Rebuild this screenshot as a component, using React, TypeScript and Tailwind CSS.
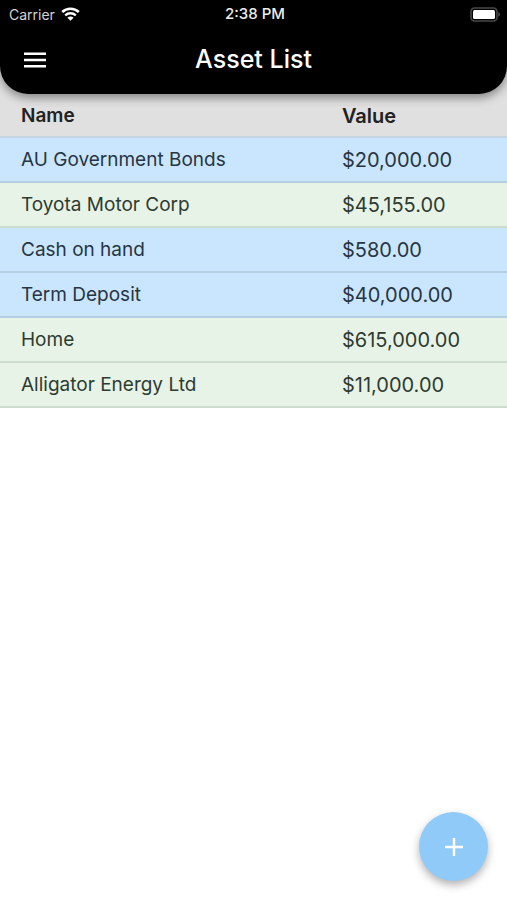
type Asset = { name: string; value: string; kind: "fixed" | "growth" };

const assets: Asset[] = [
  { name: "AU Government Bonds", value: "$20,000.00", kind: "fixed" },
  { name: "Toyota Motor Corp", value: "$45,155.00", kind: "growth" },
  { name: "Cash on hand", value: "$580.00", kind: "fixed" },
  { name: "Term Deposit", value: "$40,000.00", kind: "fixed" },
  { name: "Home", value: "$615,000.00", kind: "growth" },
  { name: "Alligator Energy Ltd", value: "$11,000.00", kind: "growth" },
];

function WifiIcon() {
  return (
    <svg width="19" height="14" viewBox="0 0 19 14" fill="none" aria-hidden="true">
      <path d="M1.2 5C5.8.6 13.2.6 17.8 5" stroke="#fff" strokeWidth="2.6" />
      <path d="M4.2 8.3c3-2.7 7.6-2.7 10.6 0" stroke="#fff" strokeWidth="2.4" />
      <path d="M9.5 13.7 6.4 10.7c1.8-1.6 4.4-1.6 6.2 0Z" fill="#fff" />
    </svg>
  );
}

function BatteryIcon() {
  return (
    <svg width="31" height="15" viewBox="0 0 31 15" aria-hidden="true">
      <rect x="1" y="1" width="26" height="13" rx="3.5" fill="#000" stroke="#484848" strokeWidth="1.6" />
      <rect x="3" y="3" width="22" height="9" rx="1.5" fill="#fff" />
      <path d="M28.4 5.3c1.9.6 1.9 3.8 0 4.4Z" fill="#5a5a5a" />
    </svg>
  );
}

function StatusBar() {
  return (
    <div className="grid h-7 grid-cols-3 items-center pr-[6px] pl-[9px]">
      <div className="flex items-center gap-[6px] text-[14px] text-[#d4d4d4]">
        <span>Carrier</span>
        <WifiIcon />
      </div>
      <div className="text-center text-[15px] font-medium text-[#ececec]">2:38 PM</div>
      <div className="flex justify-end">
        <BatteryIcon />
      </div>
    </div>
  );
}

export default function App() {
  return (
    <div className="min-h-screen bg-white font-['Inter','Liberation_Sans',sans-serif]">
      <header className="relative z-10 rounded-b-[28px] bg-black text-white shadow-[0_4px_10px_rgba(0,0,0,0.4)]">
        <StatusBar />
        <div className="grid h-[66px] grid-cols-[48px_1fr_48px] items-center px-[11px] pb-[2px]">
          <button type="button" aria-label="Open menu" className="flex size-12 items-center justify-center">
            <svg width="24" height="18" viewBox="0 0 24 18" fill="#fff" aria-hidden="true">
              <path d="M1 1.5h22V4H1zM1 7.7h22v2.5H1zM1 13.9h22v2.5H1z" />
            </svg>
          </button>
          <h1 className="text-center text-[25px] font-medium">Asset List</h1>
        </div>
      </header>
      <main className="-mt-7">
        <table className="w-full table-fixed border-separate border-spacing-0 text-left leading-6">
          <thead>
            <tr className="bg-[#e0e0e0] text-[#222] *:h-[72px] *:border-b-2 *:border-[#c5d6e3] *:pt-[30px] *:pl-[21px] *:font-semibold">
              <th scope="col" className="w-[63.3%] text-[19px]">
                Name
              </th>
              <th scope="col" className="text-[20px]">
                Value
              </th>
            </tr>
          </thead>
          <tbody>
            {assets.map((asset) => (
              <tr
                key={asset.name}
                className={
                  asset.kind === "fixed"
                    ? "bg-[#cae6fe] text-[#273542] *:border-[#b5cfe0]"
                    : "bg-[#e7f3e7] text-[#2e3b31] *:border-[#cddccf]"
                }
              >
                <td className="h-[45px] border-b-2 pl-[21px] text-[19px]">{asset.name}</td>
                <td className="h-[45px] border-b-2 pl-[21px] text-[20px]">{asset.value}</td>
              </tr>
            ))}
          </tbody>
        </table>
      </main>
      <button
        type="button"
        aria-label="Add asset"
        className="fixed right-[19px] bottom-[19px] flex size-[69px] items-center justify-center rounded-full bg-[#90caf9] shadow-[0_4px_8px_rgba(0,0,0,0.3)]"
      >
        <svg width="18" height="18" viewBox="0 0 18 18" fill="#fff" aria-hidden="true">
          <path d="M7.8 0h2.4v7.8H18v2.4h-7.8V18H7.8v-7.8H0V7.8h7.8z" />
        </svg>
      </button>
    </div>
  );
}
